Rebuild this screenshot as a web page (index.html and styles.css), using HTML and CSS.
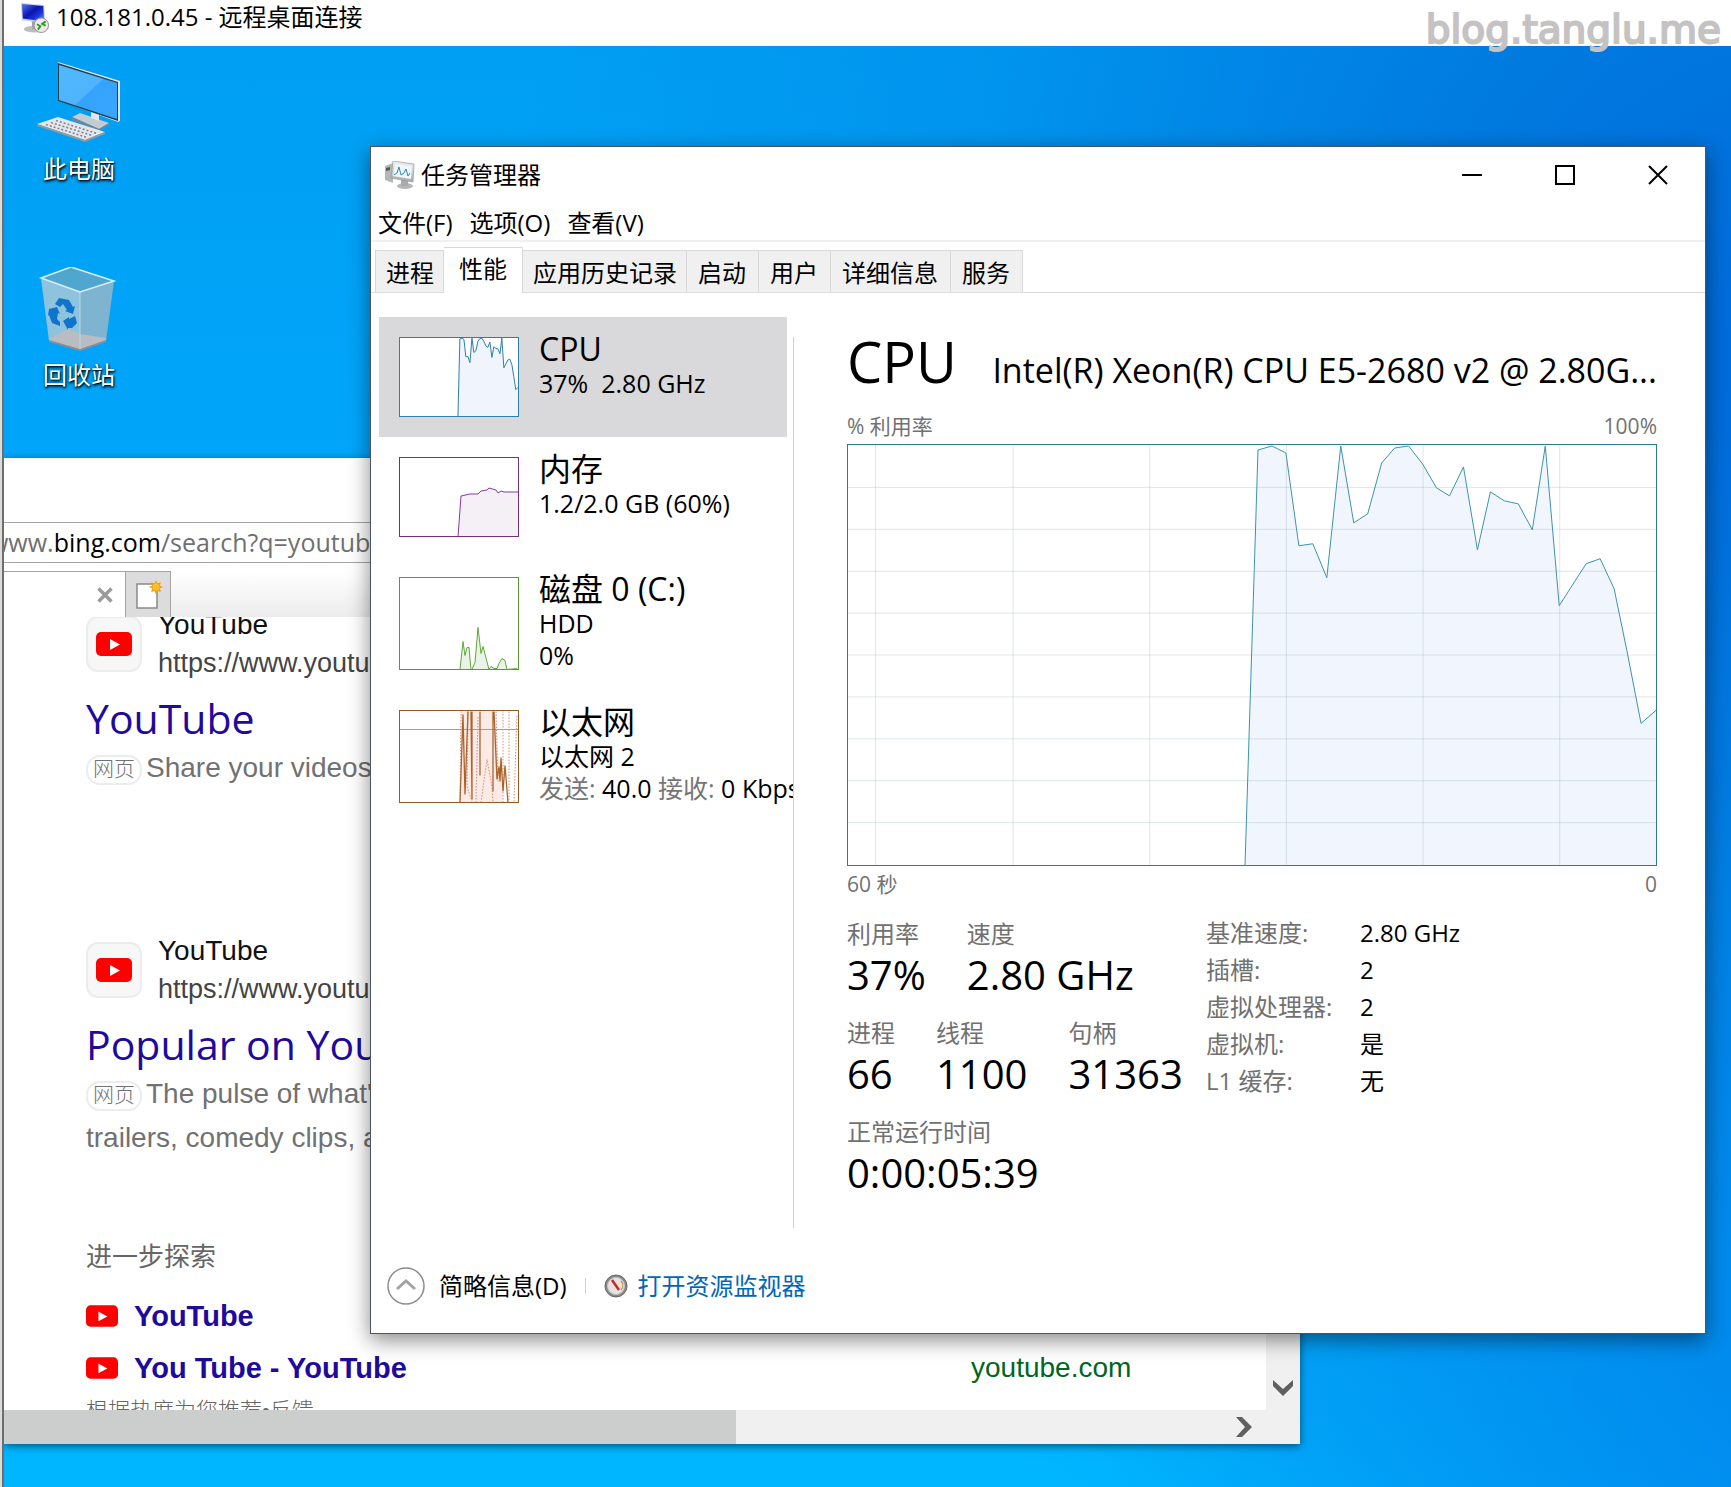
FILE: index.html
```html
<!DOCTYPE html>
<html lang="zh-CN">
<head>
<meta charset="utf-8">
<meta name="viewport" content="width=device-width, initial-scale=1">
<title>108.181.0.45 - 远程桌面连接</title>
<link rel="stylesheet" href="styles.css">
</head>
<body>
<svg class="defs" aria-hidden="true">
  <defs>
    <path id="cpu-area" d="M398 421 411 5 425 1 439 8 452 101 466 99 480 133 494 1 507 78 521 69 535 18 548 3 562 1 576 19 590 43 603 51 617 22 631 105 644 47 658 56 672 59 686 85 699 1 713 161 740 119 754 114 768 144 781 207 795 279 810 266V421Z"/>
    <path id="cpu-line" vector-effect="non-scaling-stroke" d="M398 421 411 5 425 1 439 8 452 101 466 99 480 133 494 1 507 78 521 69 535 18 548 3 562 1 576 19 590 43 603 51 617 22 631 105 644 47 658 56 672 59 686 85 699 1 713 161 740 119 754 114 768 144 781 207 795 279 810 266"/>
    <symbol id="play" viewBox="0 0 36 24">
      <rect width="36" height="24" rx="5" fill="#f00"/>
      <path d="M14 7v11l10-5.500z" fill="#fff"/>
    </symbol>
    <linearGradient id="navy" x1="0" y1="0" x2="1" y2="1"><stop offset="0" stop-color="#5a78e8"/><stop offset=".45" stop-color="#0a14b4"/><stop offset=".7" stop-color="#1c36d8"/><stop offset="1" stop-color="#8aa4f4"/></linearGradient>
    <linearGradient id="screen" x1="0" y1="0" x2="1" y2="1"><stop offset="0" stop-color="#52b9fb"/><stop offset=".5" stop-color="#4fb4fd"/><stop offset=".52" stop-color="#35a3fb"/><stop offset="1" stop-color="#3aa6ff"/></linearGradient>
    <linearGradient id="metal" x1="0" y1="0" x2="0" y2="1"><stop offset="0" stop-color="#f2f2f2"/><stop offset="1" stop-color="#a8a8a8"/></linearGradient>
  </defs>
</svg>

<div class="session">
  <header class="session-bar">
    <svg class="session-icon" viewBox="0 0 32 32" aria-hidden="true">
      <ellipse cx="16" cy="28" rx="11" ry="3.500" fill="#bdbdc2"/>
      <path d="M13 19h8l1 9h-8z" fill="#9fa0a6"/>
      <path d="M2 1l24 2 1 18-24-2z" fill="#c9cde0"/>
      <path d="M3 2l22 2 1 16-22-3z" fill="url(#navy)"/>
      <circle cx="23" cy="24" r="7.500" fill="#ecebe8" stroke="#8f8f8f"/>
      <path d="M18.500 23l3.500 2-2.500 3.500M27.500 20l-3.500 2.500 3.500 2" fill="none" stroke="#2f9a2a" stroke-width="2"/>
    </svg>
    <h1 class="session-title">108.181.0.45 - 远程桌面连接</h1>
    <div class="watermark">blog.tanglu.me</div>
  </header>

  <main class="desktop">
    <div class="shortcuts">
      <a class="shortcut" href="#computer">
        <svg class="shortcut-art" viewBox="0 0 84 84" aria-hidden="true">
          <path d="M35 56l8-4 29 10-10 6z" fill="#c4cbd2"/>
          <path d="M62 68l10-6v2l-10 6-27-11v-3z" fill="#6f8797"/>
          <path d="M54 50l8 3v7l-8-3z" fill="#e3e6ea"/>
          <path d="M21 1l62 19v40l-2 1-60-22z" fill="#dfe6ea"/>
          <path d="M21 2l60 19v39L21 40z" fill="#24404f"/>
          <path d="M22 4l58 18v36L22 39z" fill="url(#screen)"/>
          <path d="M0 63l21-7 47 15-20 8z" fill="#e4e6e9"/>
          <path d="M0 63l48 16 20-8v2l-20 8L0 65z" fill="#8f9aa2"/>
          <path d="M9 63.500l41 13M14 61.500l41 13M19 59.500l41 13" stroke="#7b868e" stroke-width="1.500" stroke-dasharray="2 2"/>
        </svg>
        <span>此电脑</span>
      </a>
      <a class="shortcut" href="#recycle">
        <svg class="shortcut-art" viewBox="0 0 84 84" aria-hidden="true">
          <path d="M4 11L34 0l43 14-34 11z" fill="#4fa6cf"/>
          <path d="M4 11l39 14v58L12 74z" fill="#8fc3dd"/>
          <path d="M77 14L43 25v58l26-9z" fill="#7fb4d0"/>
          <path d="M12 72l19-10 12 5 26 4v3l-26 9-31-9z" fill="#b9bcc2"/>
          <path d="M12 73l31 9 26-9v2l-26 9-31-9z" fill="#8f8d93"/>
          <path d="M43 25v57" stroke="#b5d7e6"/>
          <path d="M4 11L34 0l43 14-34 11z" fill="none" stroke="#d5effa" stroke-width="1.500"/>
          <g fill="#0f74cd"><path d="M18 37l4-6 10 2 4 7 2-1-2 8-8-3 2-1-4-6-3 3z"/><path d="M12 42l8-2 3 7-2-1-1 6 3 3v4l-8-3-3-8-1 1z"/><path d="M26 54l6-4v2l6-3 2 7-5 5-4 0v2z"/></g>
        </svg>
        <span>回收站</span>
      </a>
    </div>

    <section class="browser" aria-label="浏览器">
      <div class="address"><span class="address-text">www.<b>bing.com</b>/search?q=youtube</span></div>
      <div class="browser-tabs">
        <div class="browser-tab">
          <button class="plain tab-close" aria-label="关闭标签页"><svg viewBox="0 0 16 16" width="16" height="16"><path d="M1.500 1.500l13 13M14.500 1.500l-13 13" stroke="#9b9b9b" stroke-width="3.500"/></svg></button>
        </div>
        <button class="plain tab-new" aria-label="新建标签页">
          <svg viewBox="0 0 30 30" width="30" height="30"><path d="M4 4h20v24H4z" fill="#fff" stroke="#8a8a8a" stroke-width="1.500"/><path d="M23 0l1.500 3.500L28 2l-1.200 3.500L30 7l-3.200 1.500L28 12l-3.500-1L23 14.500 21.500 11 18 12l1.200-3.500L16 7l3.200-1.500L18 2l3.500 1.500z" fill="#f0a30f"/><circle cx="23" cy="7" r="3.500" fill="#ffbf2e"/></svg>
        </button>
      </div>
      <div class="browser-body">
        <div class="page">
          <div class="page-scroll">
            <article class="result">
              <div class="site">
                <div class="site-icon"><svg width="36" height="24"><use href="#play"/></svg></div>
                <div><div class="site-name">YouTube</div><div class="site-url">https://www.youtube.com</div></div>
              </div>
              <h2><a href="#youtube">YouTube</a></h2>
              <p><span class="pill">网页</span>Share your videos</p>
            </article>
            <article class="result">
              <div class="site">
                <div class="site-icon"><svg width="36" height="24"><use href="#play"/></svg></div>
                <div><div class="site-name">YouTube</div><div class="site-url">https://www.youtube.com</div></div>
              </div>
              <h2><a href="#popular">Popular on YouTube</a></h2>
              <p><span class="pill">网页</span>The pulse of what's<br>trailers, comedy clips, and</p>
            </article>
            <section class="explore">
              <h3>进一步探索</h3>
              <div class="explore-row"><a href="#yt"><svg width="32" height="22"><use href="#play"/></svg>YouTube</a></div>
              <div class="explore-row"><a href="#yt2"><svg width="32" height="22"><use href="#play"/></svg>You Tube - YouTube</a><cite>youtube.com</cite></div>
              <p class="note">根据热度为您推荐•反馈</p>
            </section>
          </div>
        </div>
        <div class="vbar"><svg width="20" height="16" viewBox="0 0 20 16"><path d="M0 0l10 9L20 0v6l-10 10L0 6z" fill="#606060"/></svg></div>
        <div class="hbar"><div class="hbar-thumb"></div><svg width="16" height="20" viewBox="0 0 16 20"><path d="M0 0h6l10 10L6 20H0l9-10z" fill="#606060"/></svg></div>
        <div class="corner"></div>
      </div>
    </section>

    <section class="taskmgr" aria-label="任务管理器">
      <header class="tm-title">
        <svg class="tm-icon" viewBox="0 0 30 28" aria-hidden="true">
          <path d="M0 5l8-3v20l-8-3z" fill="#b4b8b4"/><path d="M1 7l4-1v3l-4 1z" fill="#555"/>
          <ellipse cx="20" cy="25" rx="8" ry="3" fill="#b4b8ba"/><path d="M16 19h7v6h-7z" fill="#aaa"/>
          <path d="M8 0l21 3-1 18-22-4z" fill="url(#metal)" stroke="#999" stroke-width=".700"/>
          <path d="M10 3l17 2-1 13-18-3z" fill="#eef7fc"/>
          <path d="M9 14l3-2 2-6 2 8 3-2 2-4 2 7 2-3" fill="none" stroke="#2b86c0"/>
        </svg>
        <h2>任务管理器</h2>
        <div class="controls">
          <button class="plain" aria-label="最小化"><svg width="20" height="20"><path d="M0 10h20" stroke="#000" stroke-width="2"/></svg></button>
          <button class="plain" aria-label="最大化"><svg width="20" height="20"><path d="M1 1h18v18H1z" fill="none" stroke="#000" stroke-width="2"/></svg></button>
          <button class="plain" aria-label="关闭"><svg width="20" height="20"><path d="M1 1l18 18M19 1L1 19" stroke="#000" stroke-width="2"/></svg></button>
        </div>
      </header>
      <nav class="menu">
        <button class="plain">文件(F)</button><button class="plain">选项(O)</button><button class="plain">查看(V)</button>
      </nav>
      <div class="tabs" role="tablist">
        <button class="tab snug" role="tab">进程</button><button class="tab active" role="tab" aria-selected="true">性能</button><button class="tab snug" role="tab">应用历史记录</button><button class="tab" role="tab">启动</button><button class="tab" role="tab">用户</button><button class="tab" role="tab">详细信息</button><button class="tab" role="tab">服务</button>
      </div>
      <div class="perf">
        <ul class="devices">
          <li class="device selected">
            <svg class="thumb cpu" viewBox="0 0 810 421" preserveAspectRatio="none"><use href="#cpu-area" fill="#eff4fd"/><use href="#cpu-line" fill="none" stroke="#2e7fa8"/></svg>
            <div><h3>CPU</h3><p>37%&nbsp; 2.80 GHz</p></div>
          </li>
          <li class="device">
            <svg class="thumb memory" viewBox="0 0 118 78"><path d="M58 79L61 38 70 36H78L81 33 87 32 89 30 96 32 98 35 101 33 104 34H119V79Z" fill="#f4f0f5" stroke="#8b3a9b"/></svg>
            <div><h3>内存</h3><p>1.2/2.0 GB (60%)</p></div>
          </li>
          <li class="device">
            <svg class="thumb disk tall" viewBox="0 0 118 90"><path d="M60 91L63 63 65 77 67 69H69L71 91H72L75 84 78 49 81 75 83 68 89 91 91 88 94 90 97 90 99 85 102 80 105 82 107 91 117 90V91Z" fill="#eaf4e6" stroke="#5fa73a"/></svg>
            <div><h3>磁盘 0 (C:)</h3><p>HDD</p><p>0%</p></div>
          </li>
          <li class="device">
            <svg class="thumb net tall" viewBox="0 0 118 90">
              <path d="M61 0H93L97 30 103 91H61Z" fill="#fceae6"/>
              <path d="M0 18H118" stroke="#b09a94"/>
              <path d="M60 91L61 0M68 0L67 75 72 90M76 91L78 4M81 91L83 76 87 48 92 75 93 91M96 0L98 70M103 91V0M109 0V91M114 90L117 3" fill="none" stroke="#dc8a78" stroke-dasharray="1.500 1.500"/>
              <path d="M60 91L63 3 65 83 68 0M71 0L72 88V0M80 0V64M93 0V80M94 0L97 68 99 55 100 70 101 46 103 80 105 54 108 91" fill="none" stroke="#a9642c" stroke-width="1.300"/>
            </svg>
            <div><h3>以太网</h3><p>以太网 2</p><p><span class="muted">发送:</span> 40.0 <span class="muted">接收:</span> 0 Kbps</p></div>
          </li>
        </ul>
        <div class="divider"></div>
        <div class="detail">
          <div class="detail-head"><h3>CPU</h3><span>Intel(R) Xeon(R) CPU E5-2680 v2 @ 2.80G...</span></div>
          <div class="scale"><span>% 利用率</span><span>100%</span></div>
          <svg class="graph" viewBox="0 0 810 421" preserveAspectRatio="none">
            <use href="#cpu-area" fill="#f0f5fe"/>
            <path d="M27.500 0V421M165.500 0V421M302.500 0V421M439.500 0V421M576.500 0V421M713.500 0V421M0 42.500H810M0 84.500H810M0 126.500H810M0 168.500H810M0 210.500H810M0 252.500H810M0 294.500H810M0 336.500H810M0 378.500H810" stroke="#6f8f9b" stroke-opacity=".22"/>
            <use href="#cpu-line" fill="none" stroke="#3d93ac"/>
          </svg>
          <div class="scale"><span>60 秒</span><span>0</span></div>
          <div class="stats">
            <div class="counters">
              <dl><div><dt>利用率</dt><dd>37%</dd></div><div><dt>速度</dt><dd>2.80 GHz</dd></div></dl>
              <dl><div><dt>进程</dt><dd>66</dd></div><div><dt>线程</dt><dd>1100</dd></div><div><dt>句柄</dt><dd>31363</dd></div></dl>
              <dl><div><dt>正常运行时间</dt><dd>0:00:05:39</dd></div></dl>
            </div>
            <table class="facts">
              <tr><th scope="row">基准速度:</th><td>2.80 GHz</td></tr>
              <tr><th scope="row">插槽:</th><td>2</td></tr>
              <tr><th scope="row">虚拟处理器:</th><td>2</td></tr>
              <tr><th scope="row">虚拟机:</th><td>是</td></tr>
              <tr><th scope="row">L1 缓存:</th><td>无</td></tr>
            </table>
          </div>
        </div>
      </div>
      <footer class="tm-foot">
        <button class="plain fewer"><svg width="38" height="38"><circle cx="19" cy="19" r="18" fill="none" stroke="#8c8c8c" stroke-width="1.500"/><path d="M10 22l9-8 9 8" fill="none" stroke="#a3a3a3" stroke-width="3"/></svg>简略信息(D)</button>
        <span class="foot-sep"></span>
        <a href="#resmon"><svg width="24" height="24" viewBox="0 0 24 24"><circle cx="12" cy="12" r="11" fill="#8a8a8a" stroke="#666"/><circle cx="12" cy="12" r="8.500" fill="#e6e4e0" stroke="#c4c4c4"/><path d="M17 7a7 7 0 0 1 0 9" fill="none" stroke="#d99a4e" stroke-width="1.500"/><path d="M8 6l7 10" stroke="#c8281e" stroke-width="2.500"/></svg>打开资源监视器</a>
      </footer>
    </section>
  </main>
</div>
</body>
</html>
```
FILE: styles.css
```css
* { box-sizing: border-box; }

html { background: #dcdcdc; }

body {
  margin: 0;
  font: 24px/32px "Open Sans", "Noto Sans CJK SC", sans-serif;
  color: #000;
}

h1, h2, h3, p, ul, dl, dd { margin: 0; padding: 0; font-weight: 400; font-size: inherit; }
a { text-decoration: none; color: inherit; }
svg { display: block; flex: none; }
.defs { position: absolute; width: 0; height: 0; }

.plain {
  padding: 0;
  border: 0;
  background: none;
  font: inherit;
  color: inherit;
}

/* Remote session frame */
.session {
  display: flex;
  flex-direction: column;
  min-height: 100vh;
  margin-left: 2px;
  border-left: 2px solid #6b6f70;
}

.session-bar {
  position: relative;
  z-index: 2;
  display: flex;
  align-items: flex-start;
  gap: 6px;
  height: 46px;
  padding: 1px 0 0 15px;
  background: #fff;
}
.session-icon { width: 31px; height: 33px; }
.session-title { white-space: nowrap; }

.watermark {
  position: absolute;
  right: 10px;
  top: 6px;
  font: 39px/48px "DejaVu Sans", sans-serif;
  color: #c4c2c3;
  -webkit-text-stroke: 2px #c4c2c3;
}

.desktop {
  position: relative;
  flex: 1;
  min-height: 1240px;
  overflow: hidden;
  background:
    radial-gradient(ellipse 75% 95% at 104% 22%, #0068da 0, #0074dcdd 30%, #0088e880 65%, #00a0f400 100%),
    radial-gradient(ellipse 45% 60% at 108% 88%, #0084ee 0, #0090f000 100%),
    linear-gradient(#009ff3, #00a6fa 30%, #00b6ff);
}

.shortcuts {
  display: flex;
  flex-direction: column;
  gap: 42px;
  width: 150px;
  padding-top: 15px;
}
.shortcut {
  display: flex;
  flex-direction: column;
  align-items: center;
  gap: 8px;
  height: 164px;
  color: #fff;
  text-shadow: 1px 1px 2px #000, 0 2px 3px #000a;
}
.shortcut-art { width: 84px; height: 84px; }

/* Browser window */
.browser {
  position: absolute;
  left: 0;
  right: 431px;
  top: 412px;
  bottom: 43px;
  display: flex;
  flex-direction: column;
  padding-top: 64px;
  background: #fff;
  box-shadow: 0 2px 8px #0008;
}
.address {
  height: 41px;
  overflow: hidden;
  border: solid #a5a5a5;
  border-width: 1px 0;
  font-size: 25px;
  line-height: 38px;
  color: #707070;
  white-space: nowrap;
}
.address-text { margin-left: -15px; }
.address b { font-weight: 400; color: #000; }

.browser-tabs {
  display: flex;
  height: 46px;
  margin-top: 8px;
  background: linear-gradient(#fff, #ececec);
}
.browser-tab {
  display: flex;
  align-items: center;
  justify-content: flex-end;
  width: 121px;
  padding-right: 12px;
  border-top: 1px solid #a5a5a5;
  background: #fff;
}
.tab-new {
  display: grid;
  place-items: center;
  width: 46px;
  border: solid #a5a5a5;
  border-width: 1px 1px 0;
  background: #dcdcdc;
}

.browser-body {
  flex: 1;
  min-height: 0;
  display: grid;
  grid-template: minmax(0, 1fr) 34px / minmax(0, 1fr) 34px;
}
.page {
  overflow: hidden;
  font-family: "Liberation Sans", "Noto Sans CJK SC", sans-serif;
}
.page-scroll { margin-top: -11px; padding-left: 82px; }

.result { margin-bottom: 142px; font-size: 28px; }
.result + .result { margin-bottom: 78px; }
.site { display: flex; align-items: center; gap: 16px; height: 76px; line-height: 38px; }
.site-icon {
  display: grid;
  place-items: center;
  width: 56px;
  height: 56px;
  border: 2px solid #ececef;
  border-radius: 12px;
  background: #f7f7f8;
}
.site-name { color: #111; }
.site-url { font-size: 27px; color: #444; }
.result h2 {
  margin-top: 8px;
  font: 41px/56px "Open Sans", sans-serif;
  color: #1e0b9b;
}
.result p { line-height: 44px; color: #717171; }
.pill {
  display: inline-block;
  width: 56px;
  height: 30px;
  margin-right: 4px;
  border: 2px solid #ececef;
  border-radius: 14px;
  font-size: 21px;
  font-weight: 300;
  line-height: 24px;
  text-align: center;
  vertical-align: middle;
}

.explore h3 { margin-bottom: 14px; font-size: 26px; line-height: 38px; color: #666; }
.explore-row {
  display: grid;
  grid-template-columns: 3fr 1fr;
  font-size: 28px;
  line-height: 52px;
}
.explore-row a { display: flex; align-items: center; gap: 16px; font-size: 29px; font-weight: 700; color: #1e0b9b; }
.explore-row cite { font-style: normal; color: #006621; }
.note { margin-top: 2px; font-size: 22px; font-weight: 300; line-height: 30px; color: #666; }

.vbar { display: flex; align-items: flex-end; justify-content: center; padding-bottom: 14px; background: #f0f0f0; }
.hbar { display: flex; align-items: center; justify-content: space-between; background: #f0f0f0; }
.hbar svg { margin-right: 14px; }
.hbar-thumb { align-self: stretch; width: 58%; background: #cccdcd; }
.corner { background: #f0f0f0; }

/* Task manager window */
.taskmgr {
  position: absolute;
  left: 366px;
  right: 25px;
  top: 100px;
  bottom: 153px;
  display: flex;
  flex-direction: column;
  border: 1px solid #4a5560;
  background: #fff;
  box-shadow: 0 6px 20px #0007;
}
.tm-title { display: flex; align-items: center; height: 56px; padding-left: 14px; }
.tm-icon { width: 30px; height: 28px; }
.tm-title h2 { margin-left: 6px; }
.controls { display: flex; gap: 73px; margin-left: auto; padding-right: 37px; }

.menu {
  display: flex;
  gap: 17px;
  height: 39px;
  padding: 2px 0 0 7px;
  border-bottom: 2px solid #f0f0f0;
}

.tabs {
  display: flex;
  align-items: flex-end;
  height: 51px;
  padding: 0 4px;
  border-bottom: 1px solid #dcdcdc;
}
.tab {
  height: 42px;
  padding: 2px 12px 0 11px;
  border: solid #d9d9d9;
  border-width: 1px 1px 0 0;
  background: #f0f0f0;
  font: inherit;
  color: inherit;
  white-space: nowrap;
}
.tab:first-child { border-left-width: 1px; }
.tab.snug { padding: 2px 9px 0 10px; }
.tab.active {
  height: 46px;
  margin-bottom: -1px;
  padding: 0 15px 4px;
  background: #fff;
}

.perf { display: flex; flex: 1; }
.devices {
  width: 422px;
  padding: 24px 6px 0 8px;
  overflow: hidden;
  list-style: none;
}
.device {
  display: flex;
  align-items: flex-start;
  gap: 20px;
  min-height: 120px;
  padding: 14px 0 0 20px;
  white-space: nowrap;
}
.device:has(.tall) { min-height: 133px; }
.device.selected { background: #d9d8da; }
.device h3 { font-size: 32px; line-height: 36px; }
.device p { font-size: 25px; }
.thumb { width: 120px; height: 80px; margin-top: 6px; border: 1px solid; background: #fff; }
.thumb.tall { height: 93px; }
.cpu { border-color: #2e7fa8; }
.memory { border-color: #74307f; }
.disk { border-color: #5a9a32; }
.net { border-color: #97591c; }
.muted { color: #767676; }
.divider { width: 1px; margin-top: 44px; background: #cfcfcf; }

.detail { flex: 1; min-width: 0; padding: 30px 48px 0 53px; }
.detail-head {
  display: flex;
  align-items: baseline;
  justify-content: space-between;
  line-height: 76px;
  white-space: nowrap;
}
.detail-head h3 { font-size: 56px; }
.detail-head span { font-size: 34px; }
.scale { display: flex; justify-content: space-between; font-size: 21px; line-height: 36px; color: #717171; }
.graph { width: 100%; height: 422px; border: 1px solid #2c7c95; }

.stats { display: flex; margin-top: 15px; }
.counters { width: 359px; white-space: nowrap; }
.counters dl { display: flex; gap: 41px; margin-bottom: 17px; }
.counters dt { line-height: 34px; color: #717171; }
.counters dd { font-size: 40px; line-height: 48px; }
.facts { align-self: flex-start; margin-top: -3px; border-collapse: collapse; line-height: 37px; }
.facts th { width: 154px; padding: 0; font-weight: 400; text-align: left; color: #717171; }
.facts td { padding: 0; }

.tm-foot { display: flex; align-items: center; padding: 34px 16px 23px; line-height: 48px; }
.fewer { display: flex; align-items: center; gap: 14px; }
.foot-sep { width: 1px; height: 16px; margin: 0 18px; background: #d0d0d0; }
.tm-foot a { display: flex; align-items: center; gap: 10px; color: #0067b8; }
```
